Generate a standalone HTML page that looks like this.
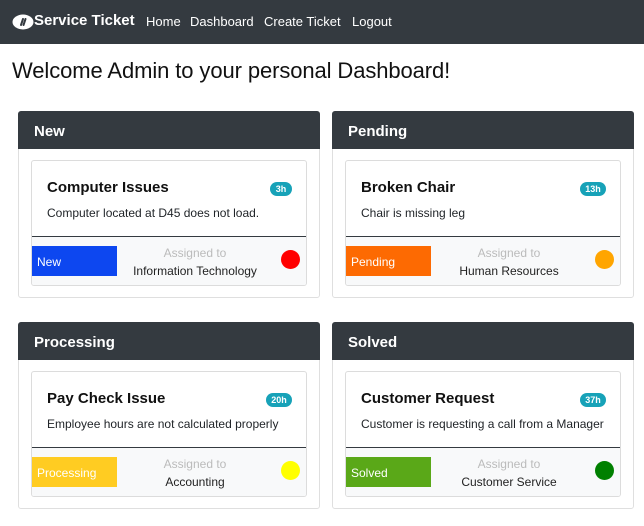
<!DOCTYPE html>
<html><head><meta charset="utf-8"><style>
*{box-sizing:border-box;margin:0;padding:0}
body{width:644px;height:526px;background:#fff;font-family:"Liberation Sans",Arial,sans-serif;color:#212529;position:relative;overflow:hidden}
.nav{position:absolute;left:0;top:0;width:644px;height:44px;background:#343a40;color:#fff}
.nav span{position:absolute;top:14px;font-size:13px}
.brand{font-weight:bold;font-size:15px!important;top:12px!important}
h1{position:absolute;left:12px;top:58px;font-size:22px;font-weight:normal;color:#111;letter-spacing:-0.1px}
.panel{position:absolute;width:302px;height:187px;border:1px solid #dfdfdf;border-radius:3px;background:#fff}
.ph{position:absolute;left:-1px;top:-1px;width:302px;height:38px;background:#343a40;color:#fff;font-weight:bold;font-size:15px;padding:12px 0 0 16px;border-radius:3px 3px 0 0}
.card{position:absolute;left:12px;top:48px;width:276px;height:126px;border:1px solid #dcdcdc;border-radius:3px;overflow:hidden}
.t{position:absolute;left:15px;top:18px;font-weight:bold;font-size:15px;color:#111}
.d{position:absolute;left:15px;top:45px;font-size:12px}
.b{position:absolute;left:238px;top:21px;width:22px;height:14px;border-radius:7px;background:#17a2b8;color:#fff;font-size:9px;font-weight:bold;text-align:center;line-height:14px}
.f{position:absolute;left:0;top:75px;width:276px;height:51px;background:#f8f9fa;border-top:1px solid #343a40}
.s{position:absolute;left:-1px;top:9px;width:86px;height:30px;color:#fff;font-size:12px;padding:9px 0 0 6px}
.a{position:absolute;left:88px;width:150px;text-align:center;font-size:12px}
.a1{top:9px;color:#bbb}.a2{top:27px;color:#222}
.dot{position:absolute;left:249px;top:13px;width:19px;height:19px;border-radius:50%}
</style></head><body>
<div class="nav">
<svg style="position:absolute;left:12px;top:14px" width="22" height="16" viewBox="0 0 22 16"><ellipse cx="11" cy="8" rx="10.5" ry="7.5" fill="#fff"/><path d="M9 11 L11 5 M11.5 11 L13.5 5" stroke="#343a40" stroke-width="2" stroke-linecap="round"/></svg>
<span class="brand" style="left:34px">Service Ticket</span>
<span style="left:146px">Home</span><span style="left:190px">Dashboard</span><span style="left:264px">Create Ticket</span><span style="left:352px">Logout</span>
</div>
<h1>Welcome Admin to your personal Dashboard!</h1>

<div class="panel" style="left:18px;top:111px"><div class="ph">New</div><div class="card">
<div class="t">Computer Issues</div><div class="b">3h</div><div class="d">Computer located at D45 does not load.</div>
<div class="f"><div class="s" style="background:#0d47f0">New</div><div class="a a1">Assigned to</div><div class="a a2">Information Technology</div><div class="dot" style="background:#f00"></div></div></div></div>

<div class="panel" style="left:332px;top:111px"><div class="ph">Pending</div><div class="card">
<div class="t">Broken Chair</div><div class="b" style="width:26px;left:234px">13h</div><div class="d">Chair is missing leg</div>
<div class="f"><div class="s" style="background:#fd6a02">Pending</div><div class="a a1">Assigned to</div><div class="a a2">Human Resources</div><div class="dot" style="background:#ffa500"></div></div></div></div>

<div class="panel" style="left:18px;top:322px"><div class="ph">Processing</div><div class="card">
<div class="t">Pay Check Issue</div><div class="b" style="width:26px;left:234px">20h</div><div class="d">Employee hours are not calculated properly</div>
<div class="f"><div class="s" style="background:#ffcc22">Processing</div><div class="a a1">Assigned to</div><div class="a a2">Accounting</div><div class="dot" style="background:#ffff00"></div></div></div></div>

<div class="panel" style="left:332px;top:322px"><div class="ph">Solved</div><div class="card">
<div class="t">Customer Request</div><div class="b" style="width:26px;left:234px">37h</div><div class="d">Customer is requesting a call from a Manager</div>
<div class="f"><div class="s" style="background:#5aa818">Solved</div><div class="a a1">Assigned to</div><div class="a a2">Customer Service</div><div class="dot" style="background:#008000"></div></div></div></div>
</body></html>
